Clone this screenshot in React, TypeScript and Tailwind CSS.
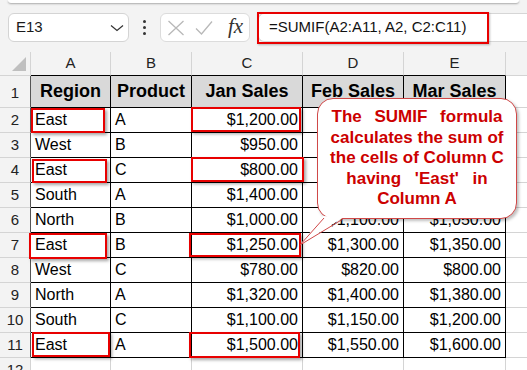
import React from "react";

type Row = { n: number; a: string; b: string; c: string; d: string; e: string };

const rows: Row[] = [
  { n: 2, a: "East", b: "A", c: "$1,200.00", d: "$1,250.00", e: "$1,300.00" },
  { n: 3, a: "West", b: "B", c: "$950.00", d: "$1,000.00", e: "$980.00" },
  { n: 4, a: "East", b: "C", c: "$800.00", d: "$850.00", e: "$900.00" },
  { n: 5, a: "South", b: "A", c: "$1,400.00", d: "$1,450.00", e: "$1,500.00" },
  { n: 6, a: "North", b: "B", c: "$1,000.00", d: "$1,100.00", e: "$1,050.00" },
  { n: 7, a: "East", b: "B", c: "$1,250.00", d: "$1,300.00", e: "$1,350.00" },
  { n: 8, a: "West", b: "C", c: "$780.00", d: "$820.00", e: "$800.00" },
  { n: 9, a: "North", b: "A", c: "$1,320.00", d: "$1,400.00", e: "$1,380.00" },
  { n: 10, a: "South", b: "C", c: "$1,100.00", d: "$1,150.00", e: "$1,200.00" },
  { n: 11, a: "East", b: "A", c: "$1,500.00", d: "$1,550.00", e: "$1,600.00" },
];

const cell = "box-border border-r border-b border-black flex items-center px-[4px] text-[16px] text-black";

function Highlight({ cls }: { cls: string }) {
  return (
    <div
      className={`absolute border-2 border-[#e80000] shadow-[2px_2px_3px_rgba(0,0,0,0.35)] pointer-events-none ${cls}`}
    />
  );
}

export default function App() {
  return (
    <div className="relative w-[527px] h-[370px] overflow-hidden bg-[#f3f3f3] font-['Liberation_Sans',Arial,sans-serif]">
      {/* top bar */}
      <div className="h-[52px] flex flex-col">
        <div className="h-[3px] mx-[8px] bg-white rounded-b-[6px] shadow-[0_1px_2px_rgba(0,0,0,0.3)]" />
        <div className="mt-[10px] h-[29px] flex items-center">
          <div className="ml-[8px] w-[121px] h-full box-border bg-white border border-[#d4d4d4] rounded-[6px] flex items-center justify-between pl-[7px] pr-[4px]">
            <span className="text-[15px] text-[#1a1a1a]">E13</span>
            <svg width="14" height="8" viewBox="0 0 14 8">
              <path d="M1 1.5 L7 6.5 L13 1.5" fill="none" stroke="#333" strokeWidth="1.2" />
            </svg>
          </div>
          <div className="w-[31px] h-full flex flex-col items-center justify-center gap-[3px]">
            <div className="w-[3px] h-[3px] bg-[#333] rounded-full" />
            <div className="w-[3px] h-[3px] bg-[#333] rounded-full" />
            <div className="w-[3px] h-[3px] bg-[#333] rounded-full" />
          </div>
          <div className="w-[90px] h-full box-border bg-white border border-[#dcdcdc] rounded-[6px] flex items-center pl-[6px]">
            <svg width="18" height="16" viewBox="0 0 18 16" className="ml-[0px]">
              <path d="M1.5 1 L16.5 15 M16.5 1 L1.5 15" stroke="#b8b8b8" strokeWidth="1.3" fill="none" />
            </svg>
            <svg width="18" height="16" viewBox="0 0 18 16" className="ml-[10px]">
              <path d="M1 8.5 L6.5 14 L17 1.5" stroke="#b8b8b8" strokeWidth="1.3" fill="none" />
            </svg>
            <span className="ml-[15px] font-['Liberation_Serif',serif] italic text-[21px] leading-none text-[#333] -mt-[3px]">
              fx
            </span>
          </div>
          <div className="relative ml-[8px] flex-1 h-full box-border bg-white border border-r-0 border-[#d6d6d6] rounded-l-[6px] flex items-center pl-[10px]">
            <span className="text-[15px] text-[#111] whitespace-nowrap">=SUMIF(A2:A11, A2, C2:C11)</span>
            <div className="absolute -left-[2px] -top-[2px] w-[232px] h-[32px] border-2 border-[#e80000] shadow-[1px_1px_2px_rgba(0,0,0,0.25)]" />
          </div>
        </div>
      </div>

      {/* grid */}
      <div className="flex flex-col">
        {/* column header row */}
        <div className="flex h-[24px] text-[15px] text-[#222]">
          <div className="w-[31px] box-border border-r border-b border-[#d4d4d4] relative">
            <svg width="31" height="23" viewBox="0 0 31 23" className="absolute left-0 top-0">
              <polygon points="26,5 26,19 12,19" fill="#bfbfbf" />
            </svg>
          </div>
          {[
            ["A", "w-[80px]"],
            ["B", "w-[81px]"],
            ["C", "w-[111px]"],
            ["D", "w-[101px]"],
            ["E", "w-[102px]"],
          ].map(([l, w]) => (
            <div
              key={l}
              className={`${w} box-border border-r border-[#d4d4d4] border-b border-b-black flex items-center justify-center`}
            >
              {l}
            </div>
          ))}
          <div className="flex-1 box-border border-b border-[#d4d4d4]" />
        </div>

        {/* header row 1 */}
        <div className="flex h-[32px]">
          <div className="w-[31px] box-border border-r border-r-[#555] border-b border-b-[#d4d4d4] flex items-center justify-center text-[15px] text-[#222] pt-[3px]">
            1
          </div>
          {[
            ["Region", "w-[80px]"],
            ["Product", "w-[81px]"],
            ["Jan Sales", "w-[111px]"],
            ["Feb Sales", "w-[101px]"],
            ["Mar Sales", "w-[102px]"],
          ].map(([t, w]) => (
            <div
              key={t}
              className={`${w} box-border border-r border-b border-black bg-[#d9d9d9] flex items-center justify-center text-[18px] font-bold text-black whitespace-nowrap`}
            >
              {t}
            </div>
          ))}
          <div className="flex-1 bg-white box-border border-b border-[#d4d4d4]" />
        </div>

        {rows.map((r) => (
          <div key={r.n} className="flex h-[25px]">
            <div className="w-[31px] box-border border-r border-r-[#555] border-b border-b-[#d4d4d4] flex items-center justify-center text-[15px] text-[#222]">
              {r.n}
            </div>
            <div className={`w-[80px] bg-white ${cell}`}>{r.a}</div>
            <div className={`w-[81px] bg-white ${cell}`}>{r.b}</div>
            <div className={`w-[111px] bg-white justify-end ${cell}`}>{r.c}</div>
            <div className={`w-[101px] bg-white justify-end ${cell}`}>{r.d}</div>
            <div className={`w-[102px] bg-white justify-end ${cell}`}>{r.e}</div>
            <div className="flex-1 bg-white box-border border-b border-[#d4d4d4]" />
          </div>
        ))}

        {/* row 12 */}
        <div className="flex h-[25px]">
          <div className="w-[31px] box-border border-r border-b border-[#d4d4d4] flex items-center justify-center text-[15px] text-[#222]">
            12
          </div>
          <div className="w-[80px] bg-white box-border border-r border-b border-[#d4d4d4]" />
          <div className="w-[81px] bg-white box-border border-r border-b border-[#d4d4d4]" />
          <div className="w-[111px] bg-white box-border border-r border-b border-[#d4d4d4]" />
          <div className="w-[101px] bg-white box-border border-r border-b border-[#d4d4d4]" />
          <div className="w-[102px] bg-white box-border border-r border-b border-[#d4d4d4]" />
          <div className="flex-1 bg-white box-border border-b border-[#d4d4d4]" />
        </div>
      </div>

      {/* highlights */}
      <Highlight cls="left-[31px] top-[108px] w-[74px] h-[25px]" />
      <Highlight cls="left-[32px] top-[159px] w-[75px] h-[24px]" />
      <Highlight cls="left-[29px] top-[233px] w-[78px] h-[26px]" />
      <Highlight cls="left-[32px] top-[332px] w-[78px] h-[25px]" />
      <Highlight cls="left-[191px] top-[107px] w-[110px] h-[25px]" />
      <Highlight cls="left-[191px] top-[157px] w-[113px] h-[25px]" />
      <Highlight cls="left-[189px] top-[233px] w-[112px] h-[24px]" />
      <Highlight cls="left-[189px] top-[332px] w-[111px] h-[26px]" />

      {/* callout */}
      <div className="absolute left-[317px] top-[98px] w-[200px] h-[121px] box-border bg-white border border-[#d04848] rounded-[16px] shadow-[2px_2px_3px_rgba(0,0,0,0.25)] flex flex-col items-center justify-center text-[#cc0000] font-bold text-[17px] leading-[20.5px] text-center whitespace-nowrap">
        <div className="[word-spacing:8px]">The SUMIF formula</div>
        <div>calculates the sum of</div>
        <div>the cells of Column C</div>
        <div className="[word-spacing:9px]">having 'East' in</div>
        <div>Column A</div>
      </div>
      <svg width="527" height="370" viewBox="0 0 527 370" className="absolute left-0 top-0 pointer-events-none">
        <polygon points="323,216 300,245 344,217" fill="#ffffff" />
        <path d="M324,218 L300,245 L343,219" fill="none" stroke="#d04848" strokeWidth="1" />
      </svg>
    </div>
  );
}
